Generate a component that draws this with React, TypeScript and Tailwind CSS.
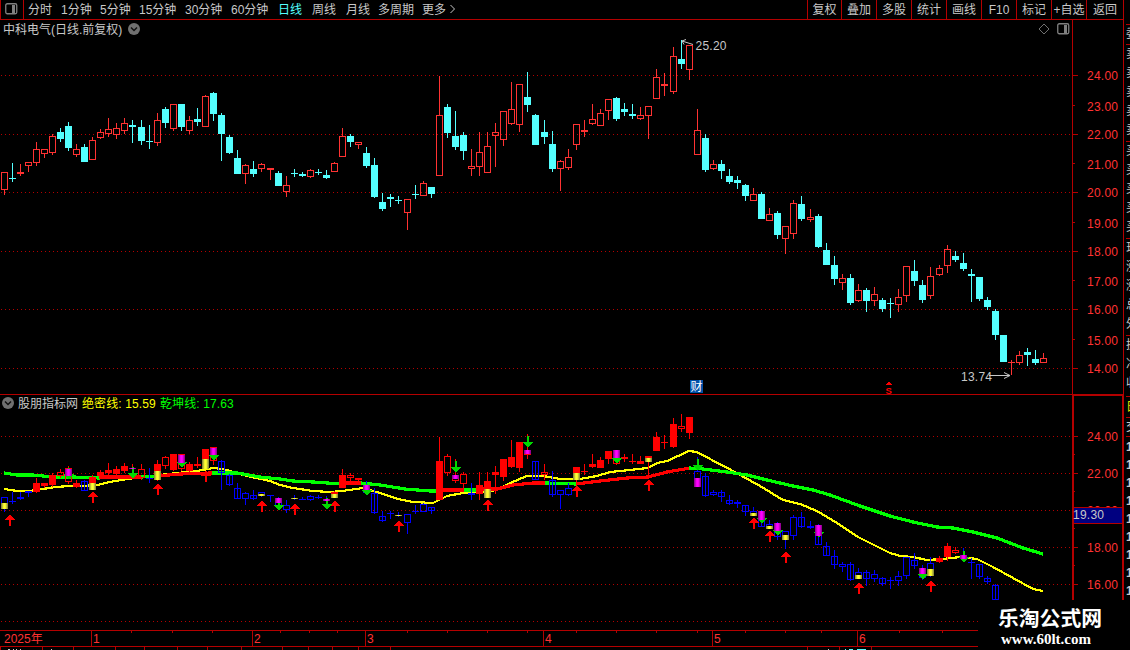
import React from "react";

// x, high, body top, body bottom, low, direction
type Candle = [number, number, number, number, number, "u" | "d"];

const CANDLES: Candle[] = [
  [4, 172, 172, 190, 195, "u"], [12, 163, 178, 179, 182, "d"], [20, 164, 172, 174, 176, "u"],
  [28, 162, 162, 166, 172, "u"], [36, 142, 149, 163, 166, "u"], [44, 149, 149, 154, 158, "u"],
  [52, 134, 136, 153, 155, "u"], [60, 128, 132, 139, 142, "d"], [68, 122, 126, 148, 151, "d"],
  [76, 144, 149, 155, 157, "u"], [84, 144, 147, 162, 162, "d"], [92, 137, 140, 160, 160, "u"],
  [100, 129, 132, 138, 139, "u"], [108, 118, 129, 134, 137, "u"], [116, 123, 128, 135, 139, "u"],
  [124, 118, 123, 131, 134, "u"], [132, 120, 125, 127, 143, "d"], [141, 120, 127, 141, 145, "d"],
  [149, 125, 141, 142, 149, "d"], [157, 113, 120, 143, 146, "u"], [165, 107, 109, 123, 128, "d"],
  [173, 104, 104, 129, 131, "u"], [181, 104, 104, 127, 131, "d"], [189, 116, 120, 131, 134, "u"],
  [197, 108, 119, 122, 126, "d"], [205, 95, 96, 127, 127, "u"], [213, 92, 93, 114, 121, "d"],
  [221, 113, 115, 134, 161, "d"], [229, 135, 137, 153, 154, "d"], [237, 150, 158, 174, 174, "d"],
  [245, 164, 165, 174, 184, "u"], [253, 161, 169, 174, 177, "d"], [261, 163, 164, 169, 172, "u"],
  [270, 168, 168, 170, 180, "u"], [278, 171, 173, 186, 186, "d"], [286, 176, 185, 192, 197, "u"],
  [294, 169, 173, 174, 177, "d"], [302, 172, 174, 176, 177, "d"], [310, 169, 170, 177, 178, "u"],
  [318, 169, 172, 173, 175, "d"], [326, 170, 175, 178, 179, "d"], [334, 162, 163, 172, 172, "u"],
  [342, 128, 136, 157, 157, "u"], [350, 134, 136, 142, 147, "d"], [358, 142, 142, 145, 149, "u"],
  [366, 147, 153, 166, 168, "d"], [374, 158, 165, 197, 198, "d"], [382, 193, 202, 209, 211, "d"],
  [390, 194, 197, 199, 207, "d"], [398, 196, 200, 201, 204, "d"], [407, 199, 199, 213, 230, "u"],
  [415, 185, 194, 195, 199, "d"], [423, 181, 183, 196, 196, "u"], [431, 187, 187, 194, 198, "d"],
  [439, 76, 115, 176, 176, "u"], [447, 104, 107, 133, 138, "d"], [455, 111, 136, 147, 150, "d"],
  [463, 132, 135, 151, 160, "d"], [471, 149, 166, 169, 176, "u"], [479, 132, 152, 167, 176, "u"],
  [487, 132, 146, 173, 173, "u"], [495, 123, 132, 136, 167, "u"], [503, 111, 111, 140, 146, "u"],
  [511, 82, 109, 124, 125, "u"], [519, 84, 84, 125, 132, "u"], [527, 72, 97, 105, 112, "d"],
  [535, 114, 115, 145, 145, "d"], [544, 120, 132, 137, 144, "d"], [552, 131, 144, 169, 172, "d"],
  [560, 160, 161, 169, 191, "u"], [568, 149, 157, 168, 170, "u"], [576, 124, 124, 145, 150, "u"],
  [584, 120, 130, 132, 137, "u"], [592, 104, 119, 124, 125, "u"], [600, 109, 113, 126, 126, "u"],
  [608, 99, 99, 111, 120, "u"], [616, 97, 98, 119, 121, "d"], [624, 103, 109, 112, 116, "d"],
  [632, 104, 114, 116, 119, "d"], [640, 107, 115, 119, 120, "u"], [648, 106, 106, 116, 139, "u"],
  [656, 69, 77, 99, 99, "u"], [664, 73, 84, 86, 96, "u"], [673, 47, 56, 92, 94, "u"],
  [681, 40, 59, 64, 69, "d"], [689, 45, 45, 70, 80, "u"], [697, 109, 130, 155, 155, "u"],
  [705, 134, 138, 170, 172, "d"], [713, 160, 164, 169, 170, "u"], [721, 160, 164, 171, 179, "d"],
  [729, 169, 176, 182, 184, "d"], [737, 176, 180, 183, 189, "d"], [745, 184, 185, 196, 201, "d"],
  [753, 188, 194, 201, 201, "u"], [761, 192, 194, 219, 219, "d"], [769, 208, 214, 221, 221, "u"],
  [777, 211, 213, 235, 239, "d"], [785, 226, 226, 239, 254, "u"], [793, 200, 203, 234, 239, "u"],
  [801, 196, 204, 219, 221, "d"], [810, 209, 217, 220, 222, "u"], [818, 214, 216, 247, 248, "d"],
  [826, 243, 250, 265, 265, "d"], [834, 256, 265, 279, 285, "d"], [842, 274, 278, 283, 290, "u"],
  [850, 274, 278, 303, 305, "d"], [858, 284, 290, 301, 302, "u"], [866, 288, 290, 301, 312, "d"],
  [874, 287, 294, 301, 306, "u"], [882, 298, 300, 309, 312, "d"], [890, 298, 303, 304, 318, "d"],
  [898, 289, 297, 305, 312, "u"], [906, 266, 266, 296, 302, "u"], [914, 260, 271, 281, 286, "d"],
  [922, 280, 285, 300, 303, "d"], [930, 267, 276, 296, 299, "u"], [939, 265, 268, 275, 276, "u"],
  [947, 245, 249, 266, 273, "u"], [955, 251, 256, 260, 262, "d"], [963, 253, 263, 269, 271, "d"],
  [971, 269, 274, 276, 302, "d"], [979, 277, 277, 299, 301, "d"], [987, 297, 300, 307, 310, "d"],
  [995, 309, 311, 335, 340, "d"], [1003, 335, 335, 362, 362, "d"], [1011, 360, 362, 363, 375, "u"],
  [1019, 351, 355, 363, 365, "u"], [1027, 348, 352, 355, 366, "d"], [1035, 350, 359, 363, 365, "d"],
  [1043, 353, 358, 363, 363, "u"],
];

// index ranges where the indicator paints the bars blue
const WEAK = [[0, 3], [10, 10], [18, 18], [27, 40], [45, 53], [58, 58], [66, 66], [68, 70], [86, 115], [119, 129]];
const isWeak = (i: number) => WEAK.some(([a, b]) => i >= a && i <= b);

const subY = (y: number) => Math.round(436 + (y - 75) * 0.6314);

const YELLOW_LINE =
  "4,489 17,491 30,491 43,489 55,487 70,486 83,486 97,485 110,482 127,479 143,477 160,475 177,473 197,471 213,468 223,469 247,476 270,481 280,485 293,488 313,491 330,492 342,491 363,488 383,494 398,499 413,502 433,503 447,496 463,493 483,492 497,490 510,483 527,476 543,476 560,479 580,479 597,476 610,472 630,470 648,468 657,463 667,461 689,451 697,452 710,459 733,471 760,486 783,500 800,504 817,511 837,523 858,537 890,553 900,556 913,557 927,560 943,559 960,557 977,559 993,567 1013,578 1033,589 1043,591";

const TREND: [string, string][] = [
  ["#00ff00", "4,473 17,475 33,475 53,477 73,477 100,478"],
  ["#ff0000", "99,477 141,477"],
  ["#00ff00", "141,477 158,476"],
  ["#ff0000", "157,476 180,474 212,473"],
  ["#00ff00", "212,473 237,473 260,477 280,479 293,481 313,482 342,484"],
  ["#ff0000", "341,483 361,483"],
  ["#00ff00", "361,483 380,485 405,489 430,491 440,491"],
  ["#ff0000", "440,490 465,490"],
  ["#00ff00", "464,490 478,490"],
  ["#ff0000", "477,489 497,489 513,485 533,483 545,483"],
  ["#00ff00", "545,483 577,484"],
  ["#ff0000", "576,484 600,481 627,478 648,477 667,472 690,468"],
  ["#00ff00", "689,468 703,469 727,472 747,475 767,480 793,486 813,490 830,495 860,506 890,516 913,522 937,527 953,528 973,532 997,538 1023,548 1043,554"],
];

const UP_ARROWS = [[10, 514], [93, 491], [158, 483], [206, 470], [262, 500], [295, 503], [335, 500], [399, 520], [488, 499], [577, 485], [649, 479], [754, 517], [770, 530], [786, 551], [859, 582], [931, 580]];
const DOWN_ARROWS = [[69, 480], [133, 479], [182, 468], [214, 461], [279, 511], [327, 510], [367, 496], [456, 473], [528, 448], [617, 464], [698, 471], [762, 524], [778, 536], [819, 538], [923, 580], [964, 563]];
const MAGENTA = [[68, 469, 476], [132, 468, 469], [181, 455, 463], [213, 448, 455], [278, 498, 503], [326, 499, 501], [366, 485, 490], [455, 475, 479], [527, 450, 454], [616, 450, 458], [697, 478, 487], [761, 511, 520], [777, 523, 531], [818, 525, 536], [922, 568, 574], [963, 555, 559]];
const GOLD = [[4, 503, 509], [92, 483, 490], [157, 471, 480], [205, 459, 469], [261, 494, 496], [294, 498, 499], [334, 494, 498], [398, 515, 516], [487, 489, 498], [576, 473, 480], [648, 458, 462], [753, 513, 516], [769, 526, 529], [785, 535, 540], [858, 575, 579], [930, 569, 576]];

const WEEK_TICKS = [131, 172, 212, 280, 309, 337, 407, 447, 487, 527, 576, 616, 656, 697, 745, 785, 821, 899, 942];

const PERIODS = [
  { label: "分时", w: "w-[33px]" },
  { label: "1分钟", w: "w-[39px]" },
  { label: "5分钟", w: "w-[39px]" },
  { label: "15分钟", w: "w-[46px]" },
  { label: "30分钟", w: "w-[46px]" },
  { label: "60分钟", w: "w-[47px]" },
  { label: "日线", w: "w-[34px]", active: true },
  { label: "周线", w: "w-[34px]" },
  { label: "月线", w: "w-[32px]" },
  { label: "多周期", w: "w-[44px]" },
  { label: "更多", w: "w-[27px]" },
];

const TOOLS = [
  { label: "复权", w: "w-[34px]" },
  { label: "叠加", w: "w-[35px]" },
  { label: "多股", w: "w-[35px]" },
  { label: "统计", w: "w-[35px]" },
  { label: "画线", w: "w-[35px]" },
  { label: "F10", w: "w-[35px]" },
  { label: "标记", w: "w-[35px]" },
  { label: "+自选", w: "w-[35px]" },
  { label: "返回", w: "w-[37px]" },
];

const MONTHS = [
  { label: "2025年", w: "w-[91px] pl-1" },
  { label: "1", w: "w-[161px] border-l pl-px" },
  { label: "2", w: "w-[113px] border-l pl-px" },
  { label: "3", w: "w-[178px] border-l pl-px" },
  { label: "4", w: "w-[169px] border-l pl-px" },
  { label: "5", w: "w-[145px] border-l pl-px" },
  { label: "6", w: "w-[121px] border-l pl-px" },
];

function PanelIcon() {
  return (
    <svg width="13" height="12" viewBox="0 0 13 12" className="shrink-0">
      <rect x="0.75" y="0.75" width="11" height="10" rx="1.5" fill="none" stroke="#808080" strokeWidth="1.3" />
      <rect x="7" y="2" width="3" height="8" fill="#808080" />
    </svg>
  );
}

function CircleChevron() {
  return (
    <svg width="12" height="12" viewBox="0 0 12 12" className="shrink-0">
      <circle cx="6" cy="6" r="6" fill="#707070" />
      <path d="M3 4.5 L6 7.5 L9 4.5" fill="none" stroke="#101010" strokeWidth="1.5" />
    </svg>
  );
}

function Grid({ rows }: { rows: number[] }) {
  return (
    <>
      {rows.map((y) => (
        <line key={y} x1="1" x2="1072" y1={y + 0.5} y2={y + 0.5} stroke="#b40000" strokeDasharray="1 3" />
      ))}
    </>
  );
}

function MainCandle({ c }: { c: Candle }) {
  const [x, hi, top, bot, lo, dir] = c;
  if (dir === "d") {
    return (
      <g fill="#54ffff">
        <rect x={x} y={hi} width="1" height={lo - hi} />
        <rect x={x - 3} y={top} width="7" height={bot - top} />
      </g>
    );
  }
  return (
    <g fill="#ff3232">
      <rect x={x} y={hi} width="1" height={top - hi} />
      <rect x={x} y={bot} width="1" height={lo - bot} />
      {bot - top < 3 ? (
        <rect x={x - 3} y={top} width="7" height={bot - top} />
      ) : (
        <rect x={x - 2.5} y={top + 0.5} width="6" height={bot - top - 1} fill="none" stroke="#ff3232" />
      )}
    </g>
  );
}

function SubCandle({ c, weak }: { c: Candle; weak: boolean }) {
  const x = c[0];
  const [hi, top, rawBot, lo] = [subY(c[1]), subY(c[2]), subY(c[3]), subY(c[4])];
  const bot = Math.max(rawBot, top + 1);
  const color = weak ? "#0000ff" : "#ff0000";
  const solid = bot - top < 3 || (!weak && c[5] === "u");
  const through = weak && c[5] === "d";
  return (
    <g fill={color}>
      <rect x={x} y={hi} width="1" height={through ? Math.max(lo - hi, 0) : top - hi} />
      <rect x={x} y={bot} width="1" height={Math.max(lo - bot, 0)} />
      {solid ? (
        <rect x={x - 3} y={top} width="7" height={bot - top} />
      ) : (
        <rect x={x - 2.5} y={top + 0.5} width="6" height={bot - top - 1} fill="none" stroke={color} />
      )}
    </g>
  );
}

function MainChart() {
  return (
    <svg width="1072" height="356" viewBox="0 38 1072 356" className="block" shapeRendering="crispEdges">
      <Grid rows={[75, 134, 192, 251, 309, 368]} />
      {CANDLES.map((c) => (
        <MainCandle key={c[0]} c={c} />
      ))}
      <g fill="none" stroke="#c8c8c8" shapeRendering="auto">
        <path d="M693 44.5 L682 41 M686 39.5 L682 41 L684 44.5" />
        <path d="M989 375.5 H1010 M1004 372.5 L1010 375.5 L1004 378.5" />
      </g>
      <g fill="#c8c8c8" fontSize="12">
        <text x="695.5" y="50" textLength="31">25.20</text>
        <text x="961" y="381" textLength="31">13.74</text>
      </g>
      <rect x="690" y="380" width="13" height="13" fill="#0050a8" />
      <text x="690.5" y="391" fontSize="12" fill="#fff">财</text>
      <path d="M885 385 L888.5 381.5 L892 385 Z" fill="#ff0000" />
      <text x="885.5" y="393.5" fontSize="9.5" fontWeight="bold" fill="#ff0000">S</text>
    </svg>
  );
}

function SubChart() {
  return (
    <svg width="1072" height="219" viewBox="0 411 1072 219" className="block" shapeRendering="crispEdges">
      <defs>
        <linearGradient id="magenta">
          <stop offset="0" stopColor="#800080" />
          <stop offset="0.4" stopColor="#ff00ff" />
          <stop offset="0.6" stopColor="#ff00ff" />
          <stop offset="1" stopColor="#800080" />
        </linearGradient>
        <linearGradient id="gold">
          <stop offset="0" stopColor="#77773c" />
          <stop offset="0.4" stopColor="#ffff30" />
          <stop offset="0.6" stopColor="#ffff30" />
          <stop offset="1" stopColor="#77773c" />
        </linearGradient>
      </defs>
      <Grid rows={[436, 473, 510, 547, 584, 621]} />
      <polyline points={YELLOW_LINE} fill="none" stroke="#ffff00" strokeWidth="2.2" />
      {TREND.map(([color, points]) => (
        <polyline key={points} points={points} fill="none" stroke={color} strokeWidth="3.2" />
      ))}
      {CANDLES.map((c, i) => (
        <SubCandle key={c[0]} c={c} weak={isWeak(i)} />
      ))}
      {UP_ARROWS.map(([x, y]) => (
        <path key={x} d={`M${x} ${y} l5 6 h-4 v6 h-2 v-6 h-4 z`} fill="#ff0000" />
      ))}
      {DOWN_ARROWS.map(([x, y]) => (
        <path key={x} d={`M${x} ${y} l5 -6 h-4 v-6 h-2 v6 h-4 z`} fill="#00d800" />
      ))}
      {MAGENTA.map(([x, a, b]) => (
        <rect key={x} x={x - 3} y={a} width="7" height={b - a} fill="url(#magenta)" />
      ))}
      {GOLD.map(([x, a, b]) => (
        <rect key={x} x={x - 3} y={a} width="7" height={b - a} fill="url(#gold)" />
      ))}
    </svg>
  );
}

function MainAxis() {
  const labels = [75, 106, 134, 164, 192, 223, 251, 281, 309, 340, 368];
  const ticks = [75, 105, 134, 163, 192, 222, 251, 280, 309, 339, 368];
  return (
    <svg width="51" height="374" viewBox="1072 20 51 374" className="block" shapeRendering="crispEdges">
      <rect x="1072" y="20" width="1" height="374" fill="#b40000" />
      {labels.map((y, i) => (
        <g key={y}>
          <rect x="1073" y={ticks[i]} width={i % 2 ? 2 : 5} height="1" fill="#b40000" />
          <text x="1087" y={y + 5} fontSize="12" fill="#ff3232" textLength="31">{`${24 - i}.00`}</text>
        </g>
      ))}
    </svg>
  );
}

function SubAxis() {
  const labels = [436, 473, 510, 547, 584];
  return (
    <svg width="52" height="236" viewBox="1072 394 52 236" className="block" shapeRendering="crispEdges">
      <rect x="1073" y="395" width="50" height="300" fill="none" stroke="#b40000" strokeWidth="2" />
      {labels.map((y, i) => (
        <g key={y}>
          <rect x="1074" y={y} width="4" height="1" fill="#b40000" />
          <rect x="1074" y={y + 18} width="1" height="1" fill="#b40000" />
          <text x="1087" y={y + 5} fontSize="12" fill="#ff3232" textLength="31">{`${24 - i * 2}.00`}</text>
        </g>
      ))}
      <rect x="1074" y="507" width="48" height="17" fill="#b40000" />
      <rect x="1074" y="508" width="48" height="15" fill="#000080" />
      <text x="1073" y="519" fontSize="12" fill="#c8c8c8" textLength="31">19.30</text>
    </svg>
  );
}

// neighbouring quote panel, only its left edge is visible
function SideStrip() {
  return (
    <aside className="w-[7px] shrink-0 overflow-hidden whitespace-nowrap border-l border-[#b40000] pl-0.5 text-[12px] text-[#c8c8c8]">
      <div className="h-[25px] border-b border-[#b40000]" />
      <div className="h-[20px] border-b border-[#b40000] leading-[19px]">委</div>
      <div className="h-[97px] border-b border-[#b40000] leading-[19px]">
        {["五", "四", "三", "二", "一"].map((t) => <div key={t}>卖{t}</div>)}
      </div>
      <div className="h-[97px] border-b border-[#b40000] leading-[19px]">
        {["一", "二", "三", "四", "五"].map((t) => <div key={t}>买{t}</div>)}
      </div>
      <div className="h-[97px] border-b border-[#b40000] leading-[19px]">
        {["现价", "涨跌", "涨幅", "总量", "外盘"].map((t) => <div key={t}>{t}</div>)}
      </div>
      <div className="h-[61px] border-b border-[#b40000] leading-[19px]">
        {["换手", "净资", "收益"].map((t) => <div key={t}>{t}</div>)}
      </div>
      <div className="h-[21px] border-b border-[#b40000] leading-5 text-[#e0e000]">日</div>
      <div className="h-[19px] border-b border-[#b40000] leading-[18px]">交易</div>
      <div className="pt-px font-bold leading-[18px]">
        {["14:50", "14:51", "14:52", "14:53", "14:54", "14:55", "14:56", "14:57", "15:00"].map((t) => <div key={t}>{t}</div>)}
      </div>
    </aside>
  );
}

export default function App() {
  return (
    <div className="relative flex h-[650px] w-[1130px] overflow-hidden bg-black font-['Liberation_Sans','Noto_Sans_CJK_SC',sans-serif] text-[12px] leading-none text-[#c8c8c8]">
      <div className="flex w-[1123px] shrink-0 flex-col">
        <header className="flex h-5 shrink-0 items-stretch border-b border-[#b40000]">
          <div className="flex w-6 items-center justify-center border-x border-[#b40000] pb-0.5 pr-0.5">
            <PanelIcon />
          </div>
          <nav className="flex items-center pl-1 whitespace-nowrap">
            {PERIODS.map((p) => (
              <div key={p.label} className={`${p.w} ${p.active ? "text-[#54ffff]" : ""}`}>{p.label}</div>
            ))}
            <svg width="8" height="10" viewBox="0 0 8 10">
              <path d="M1.5 0 L5.5 4 L1.5 8" fill="none" stroke="#c8c8c8" />
            </svg>
          </nav>
          <div className="ml-auto flex whitespace-nowrap">
            {TOOLS.map((t) => (
              <div key={t.label} className={`${t.w} flex items-center justify-center border-l border-[#b40000]`}>{t.label}</div>
            ))}
          </div>
        </header>

        <section className="flex h-[374px] shrink-0">
          <div className="w-[1072px]">
            <div className="flex h-[18px] items-center pl-[3px]">
              <span className="w-[125px] whitespace-nowrap pt-px">中科电气(日线.前复权)</span>
              <CircleChevron />
              <div className="ml-auto flex items-center gap-[7px] pr-0.5">
                <svg width="12" height="12" viewBox="0 0 12 12">
                  <path d="M6 1 L11 6 L6 11 L1 6 Z" fill="none" stroke="#707070" />
                </svg>
                <PanelIcon />
              </div>
            </div>
            <MainChart />
          </div>
          <MainAxis />
        </section>

        <section className="flex h-[236px] shrink-0">
          <div className="w-[1072px] shrink-0 border-t border-[#b40000]">
            <div className="flex h-4 items-center pl-0.5 whitespace-nowrap">
              <CircleChevron />
              <span className="ml-1 w-16 pt-px">股朋指标网</span>
              <span className="w-[78px] pt-px tracking-[0.12px] text-[#ffff00]">绝密线: 15.59</span>
              <span className="pt-px tracking-[0.12px] text-[#00ff00]">乾坤线: 17.63</span>
            </div>
            <SubChart />
          </div>
          <div className="shrink-0">
            <SubAxis />
          </div>
        </section>

        <footer className="relative w-[978px]">
          <div className="flex h-[17px] items-center border-y border-[#b40000] text-[#ff3232]">
            {MONTHS.map((m) => (
              <div key={m.label} className={`${m.w} flex h-full items-center border-[#b40000] pt-px`}>{m.label}</div>
            ))}
          </div>
          <svg width="978" height="3" className="absolute top-0 left-0" shapeRendering="crispEdges">
            {WEEK_TICKS.map((x) => (
              <rect key={x} x={x} width="1" height="3" fill="#b40000" />
            ))}
          </svg>
          <svg width="978" height="3" className="block" shapeRendering="crispEdges">
            {[0, 42, 73, 115, 144, 177, 207, 241, 282, 308, 332, 358, 390, 807, 839, 871].map((x) => (
              <rect key={x} x={x} width="1" height="3" fill="#b40000" />
            ))}
            <path d="M8 2.5 h2 M13 2.5 h1 M16 2.5 h1 M20 2.5 h1 M51 2.5 h1 M828 2.5 h1" stroke="#c8c8c8" />
            <path d="M845 2.5 h1 M849 2.5 h4 M857 2.5 h9" stroke="#54ffff" />
          </svg>
        </footer>
      </div>

      <SideStrip />

      <div className="absolute top-[600px] left-[978px] flex h-[50px] w-[152px] flex-col bg-black pl-5 text-white">
        <div className="mt-[9px] text-[20.8px] leading-5 font-bold whitespace-nowrap">乐淘公式网</div>
        <div className="mt-0.5 pl-[3px] font-['Liberation_Serif',serif] text-[15px] leading-4 font-bold">www.60lt.com</div>
      </div>
    </div>
  );
}
